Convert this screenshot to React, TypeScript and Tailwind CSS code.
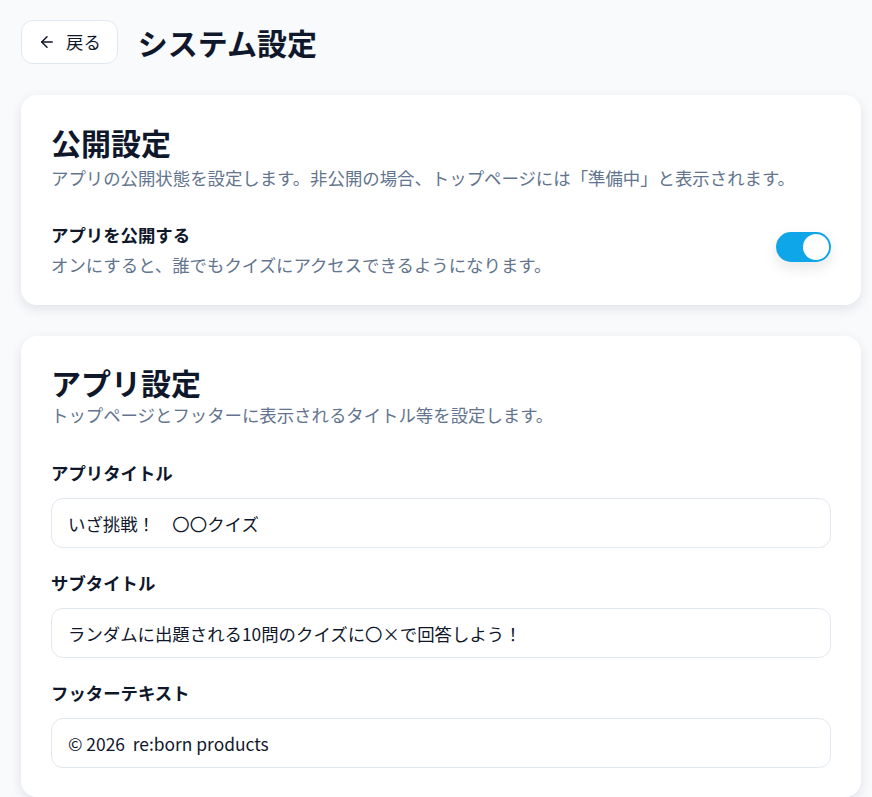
import React, { useState } from "react";
import { ArrowLeft } from "lucide-react";

const font = {
  fontFamily: '"Noto Sans CJK JP", "Noto Sans", sans-serif',
};

function Toggle({ on, onChange }: { on: boolean; onChange: (v: boolean) => void }) {
  return (
    <button
      type="button"
      role="switch"
      aria-checked={on}
      onClick={() => onChange(!on)}
      className={`mb-[6px] flex h-[30px] w-[55px] shrink-0 items-center rounded-full p-[2px] shadow-[0_6px_14px_rgba(15,23,42,0.10)] ${
        on ? "justify-end bg-[#0ea5e9]" : "justify-start bg-slate-300"
      }`}
    >
      <span className="block h-[26px] w-[26px] rounded-full bg-white" />
    </button>
  );
}

function Field({ label, value, first }: { label: string; value: string; first?: boolean }) {
  const [v, setV] = useState(value);
  return (
    <div className={first ? "mt-[32px]" : "mt-[22px]"}>
      <label className="block text-[17.4px] font-bold leading-[26px] text-slate-900">{label}</label>
      <input
        value={v}
        onChange={(e) => setV(e.target.value)}
        className="mt-3 block h-[50px] w-full rounded-xl border border-slate-200 bg-white px-4 text-[17.4px] text-slate-900 outline-none"
      />
    </div>
  );
}

export default function App() {
  const [published, setPublished] = useState(true);
  return (
    <div className="min-h-screen bg-slate-50 text-slate-900" style={font}>
      <div className="box-content w-[840px] pl-[21px] pt-5">
        <header className="flex items-center gap-5">
          <button
            type="button"
            className="flex h-11 items-center gap-[10px] rounded-xl border border-slate-200 bg-white px-4 text-[17.4px] text-slate-900"
          >
            <ArrowLeft size={18} strokeWidth={2} />
            <span>戻る</span>
          </button>
          <h1 className="text-3xl font-bold leading-9 text-slate-900">システム設定</h1>
        </header>

        <section className="mt-[31px] rounded-2xl bg-white px-[30px] pt-[29px] pb-[27px] shadow-[0_4px_12px_rgba(15,23,42,0.10)]">
          <h2 className="text-3xl font-bold leading-9 text-slate-900">公開設定</h2>
          <p className="mt-[5px] text-[17.4px] leading-[26px] text-slate-500">
            アプリの公開状態を設定します。非公開の場合、トップページには「準備中」と表示されます。
          </p>
          <div className="mt-[31px] flex items-center justify-between">
            <div>
              <div className="text-[17.4px] font-bold leading-[26px] text-slate-900">アプリを公開する</div>
              <div className="mt-1 text-[17.4px] leading-[26px] text-slate-500">
                オンにすると、誰でもクイズにアクセスできるようになります。
              </div>
            </div>
            <Toggle on={published} onChange={setPublished} />
          </div>
        </section>

        <section className="mt-[31px] rounded-2xl bg-white px-[30px] pt-[28px] pb-[29px] shadow-[0_4px_12px_rgba(15,23,42,0.10)]">
          <h2 className="text-3xl font-bold leading-9 text-slate-900">アプリ設定</h2>
          <p className="mt-[2px] text-[17.4px] leading-[26px] text-slate-500">
            トップページとフッターに表示されるタイトル等を設定します。
          </p>
          <Field first label="アプリタイトル" value="いざ挑戦！　〇〇クイズ" />
          <Field label="サブタイトル" value="ランダムに出題される10問のクイズに〇×で回答しよう！" />
          <Field label="フッターテキスト" value="© 2026  re:born products" />
        </section>
      </div>
    </div>
  );
}
